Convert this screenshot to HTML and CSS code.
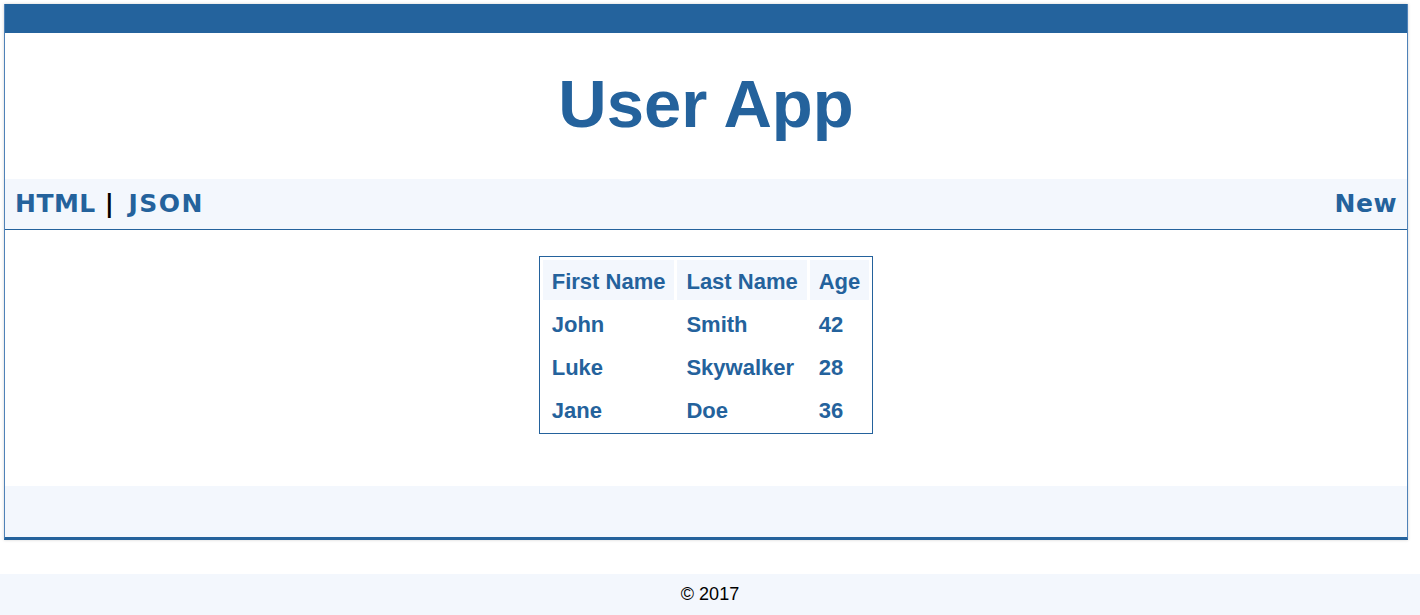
FILE: index.html
```html
<!DOCTYPE html>
<html lang="en">
<head>
<meta charset="utf-8">
<title>User App</title>
<link rel="stylesheet" href="styles.css">
</head>
<body>
<div class="app">
  <div class="topbar"></div>
  <h1 class="title">User App</h1>
  <nav class="nav">
    <div class="nav-left"><a class="nav-link" href="#">HTML</a><span class="sep">|</span><a class="nav-link" href="#">JSON</a></div>
    <a class="nav-link" href="#">New</a>
  </nav>
  <main class="content">
    <table class="users">
      <thead>
        <tr><th>First Name</th><th>Last Name</th><th>Age</th></tr>
      </thead>
      <tbody>
        <tr><td>John</td><td>Smith</td><td>42</td></tr>
        <tr><td>Luke</td><td>Skywalker</td><td>28</td></tr>
        <tr><td>Jane</td><td>Doe</td><td>36</td></tr>
      </tbody>
    </table>
  </main>
  <div class="app-foot"></div>
</div>
<footer class="footer">© 2017</footer>
</body>
</html>
```
FILE: styles.css
```css
html, body {
  margin: 0;
  padding: 0;
  background: #ffffff;
}
body {
  padding-top: 4px;
  font-family: "Liberation Sans", Arial, sans-serif;
  overflow: hidden;
}
.app {
  width: 1402px;
  margin-left: 4px;
  border-left: 1px solid #4f82b8;
  border-right: 1px solid #4f82b8;
  border-bottom: 3px solid #24629c;
  box-shadow: 0 0 3px rgba(0, 0, 0, 0.18);
  background: #ffffff;
}
.topbar {
  height: 29px;
  background: #24639d;
}
.title {
  margin: 0;
  padding: 33px 0 37px;
  text-align: center;
  font-family: "Liberation Sans", Arial, sans-serif;
  font-weight: bold;
  font-size: 67px;
  line-height: 76px;
  color: #24629c;
}
.nav {
  display: flex;
  justify-content: space-between;
  align-items: center;
  height: 50px;
  padding: 0 10px;
  background: #f3f7fd;
  border-bottom: 1px solid #24629c;
  font-family: "DejaVu Sans", Verdana, sans-serif;
  font-weight: bold;
  font-size: 25px;
  line-height: 50px;
  letter-spacing: 0.5px;
}
.nav-link {
  color: #24629c;
  text-decoration: none;
}
.nav-left .nav-link:last-child {
  letter-spacing: 1.5px;
}
.sep {
  color: #000000;
  margin: 0 14px 0 9px;
}
.content {
  display: flex;
  justify-content: center;
  padding: 26px 0 52px;
}
.users {
  border: 1px solid #24629c;
  border-spacing: 3px;
  font-family: "Liberation Sans", Arial, sans-serif;
  font-weight: bold;
  font-size: 22px;
  line-height: 24px;
  color: #24629c;
}
.users th,
.users td {
  padding: 10px 9px 6px;
  text-align: left;
}
.users th {
  background: #f3f7fd;
}
.users tbody tr:last-child td {
  padding-bottom: 7px;
}
.app-foot {
  height: 51px;
  background: #f3f7fd;
}
.footer {
  margin-top: 34px;
  height: 41px;
  line-height: 41px;
  background: #f3f7fd;
  text-align: center;
  font-family: "Liberation Sans", Arial, sans-serif;
  font-size: 18px;
  color: #000000;
}
```
